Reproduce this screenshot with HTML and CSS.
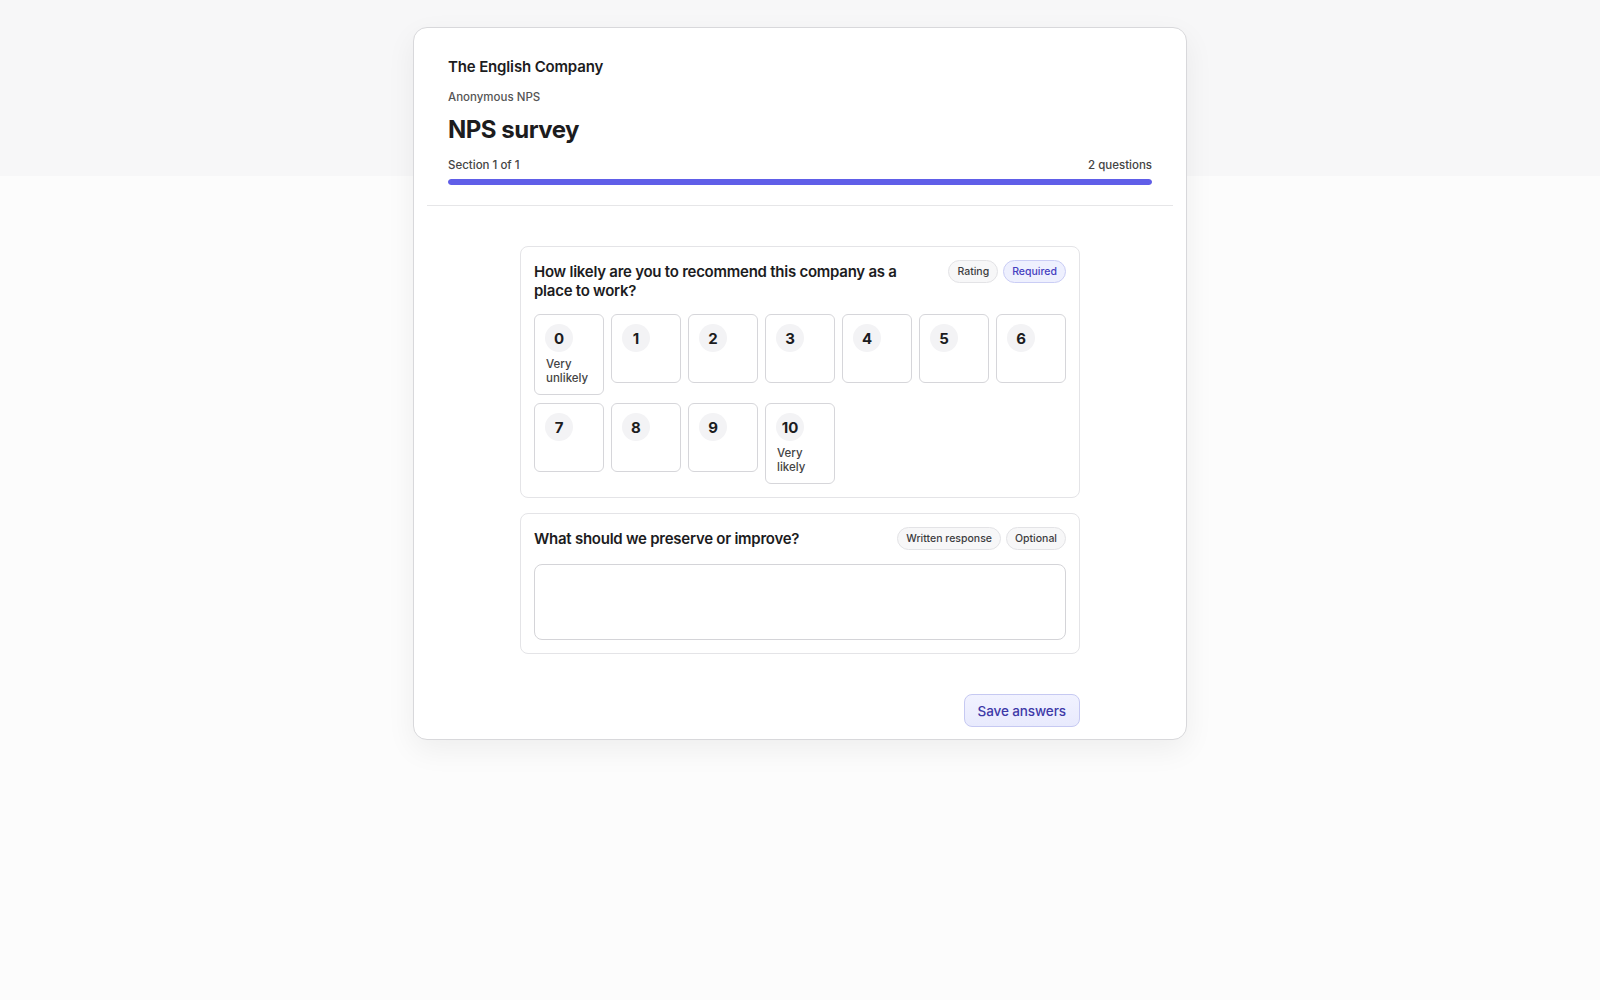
FILE: index.html
```html
<!DOCTYPE html>
<html lang="en">
<head>
    <meta charset="UTF-8">
    <meta name="viewport" content="width=device-width, initial-scale=1.0">
    <title>NPS survey - The English Company</title>
    <link rel="stylesheet" href="styles.css">
</head>
<body>
    <div class="page">
        <div class="card">
            <!-- Survey header -->
            <div class="survey-head">
                <div class="company">The English Company</div>
                <div class="kind">Anonymous NPS</div>
                <h1>NPS survey</h1>
                <div class="progress-meta">
                    <span>Section 1 of 1</span>
                    <span>2 questions</span>
                </div>
                <div class="progress"><div class="progress-fill" style="width: 100%"></div></div>
            </div>

            <div class="survey-body">
                <div class="question">
                    <div class="question-head">
                        <h3>How likely are you to recommend this company as a place to work?</h3>
                        <div class="tags">
                            <span class="tag">Rating</span>
                            <span class="tag tag-required">Required</span>
                        </div>
                    </div>
                    <div class="scale">
                        <button class="score"><span class="num">0</span><span class="label">Very unlikely</span></button>
                        <button class="score"><span class="num">1</span></button>
                        <button class="score"><span class="num">2</span></button>
                        <button class="score"><span class="num">3</span></button>
                        <button class="score"><span class="num">4</span></button>
                        <button class="score"><span class="num">5</span></button>
                        <button class="score"><span class="num">6</span></button>
                        <button class="score"><span class="num">7</span></button>
                        <button class="score"><span class="num">8</span></button>
                        <button class="score"><span class="num">9</span></button>
                        <button class="score"><span class="num">10</span><span class="label">Very likely</span></button>
                    </div>
                </div>

                <div class="question">
                    <div class="question-head">
                        <h3>What should we preserve or improve?</h3>
                        <div class="tags">
                            <span class="tag">Written response</span>
                            <span class="tag">Optional</span>
                        </div>
                    </div>
                    <textarea class="answer"></textarea>
                </div>

                <div class="actions">
                    <button class="save">Save answers</button>
                </div>
            </div>
        </div>
    </div>
</body>
</html>
```

FILE: styles.css
```css
body {
    margin: 0;
    font-family: Inter, "Noto Sans", sans-serif;
    color: #1c1c1e;
    background: linear-gradient(#f7f7f8 0, #f7f7f8 176px, #fcfcfc 176px);
    min-height: 100vh;
}
.page {
    padding-top: 27px;
}
.card {
    box-sizing: border-box;
    width: 774px;
    margin: 0 auto;
    padding: 13px 13px 12px;
    background: #fff;
    border: 1px solid #d8d8db;
    border-radius: 14px;
    box-shadow: 0 10px 30px rgba(0, 0, 0, 0.06);
}
.survey-head {
    padding: 16px 21px 20px;
    border-bottom: 1px solid #e6e6e8;
}
.company {
    font-size: 15px;
    line-height: 20px;
    font-weight: 600;
    letter-spacing: -0.15px;
}
.kind {
    margin-top: 12px;
    font-size: 11.5px;
    line-height: 16px;
    font-weight: 500;
    color: #555;
}
h1 {
    margin: 9px 0 0;
    font-size: 24px;
    line-height: 32px;
    font-weight: 700;
    letter-spacing: -0.5px;
}
.progress-meta {
    display: flex;
    justify-content: space-between;
    margin-top: 11px;
    font-size: 11.5px;
    line-height: 16px;
    font-weight: 500;
    color: #444;
}
.progress {
    margin-top: 6px;
    height: 6px;
    border-radius: 3px;
    background: #ececf0;
    overflow: hidden;
}
.progress-fill {
    height: 100%;
    background: #605ee8;
    border-radius: 3px;
}
.survey-body {
    width: 560px;
    margin: 0 auto;
    padding-top: 40px;
}
.question {
    border: 1px solid #e4e4e7;
    border-radius: 8px;
    padding: 13px;
    margin-bottom: 15px;
}
.question-head {
    display: flex;
    justify-content: space-between;
    align-items: flex-start;
    gap: 24px;
}
h3 {
    margin: 2px 0 0;
    font-size: 15px;
    line-height: 19px;
    font-weight: 600;
    letter-spacing: -0.25px;
}
.tags {
    display: flex;
    gap: 5px;
    flex-shrink: 0;
}
.tag {
    display: inline-flex;
    align-items: center;
    height: 23px;
    box-sizing: border-box;
    padding: 0 8px;
    border: 1px solid #e3e3e6;
    border-radius: 12px;
    background: #f7f7f8;
    font-size: 10.5px;
    font-weight: 500;
    color: #3d3d40;
}
.tag-required {
    background: #eef0fe;
    border-color: #cacdf5;
    color: #4540c0;
}
.scale {
    display: flex;
    flex-wrap: wrap;
    align-items: flex-start;
    gap: 8px 7px;
    margin-top: 14px;
}
.score {
    box-sizing: border-box;
    width: 70px;
    min-height: 69px;
    display: flex;
    flex-direction: column;
    align-items: flex-start;
    padding: 9px 8px 9px 10px;
    background: #fff;
    border: 1px solid #d6d6da;
    border-radius: 6px;
    font-family: inherit;
    text-align: left;
    cursor: pointer;
}
.num {
    width: 28px;
    height: 28px;
    border-radius: 50%;
    background: #f3f3f5;
    display: flex;
    align-items: center;
    justify-content: center;
    font-size: 15px;
    font-weight: 700;
    color: #1c1c1e;
}
.label {
    margin: 5px 0 0 1px;
    font-size: 11.5px;
    line-height: 14px;
    font-weight: 500;
    color: #444;
}
.answer {
    display: block;
    box-sizing: border-box;
    width: 100%;
    height: 76px;
    margin-top: 14px;
    border: 1px solid #d4d4d8;
    border-radius: 8px;
    resize: none;
    font-family: inherit;
    font-size: 14px;
}
.actions {
    display: flex;
    justify-content: flex-end;
    margin-top: 40px;
}
.save {
    height: 33px;
    padding: 0 13px;
    border: 1px solid #c6c9f2;
    border-radius: 8px;
    background: linear-gradient(#f1f2ff, #e8eafd);
    font-family: inherit;
    font-size: 13.5px;
    font-weight: 500;
    letter-spacing: -0.1px;
    color: #3d39a8;
    cursor: pointer;
}
```
